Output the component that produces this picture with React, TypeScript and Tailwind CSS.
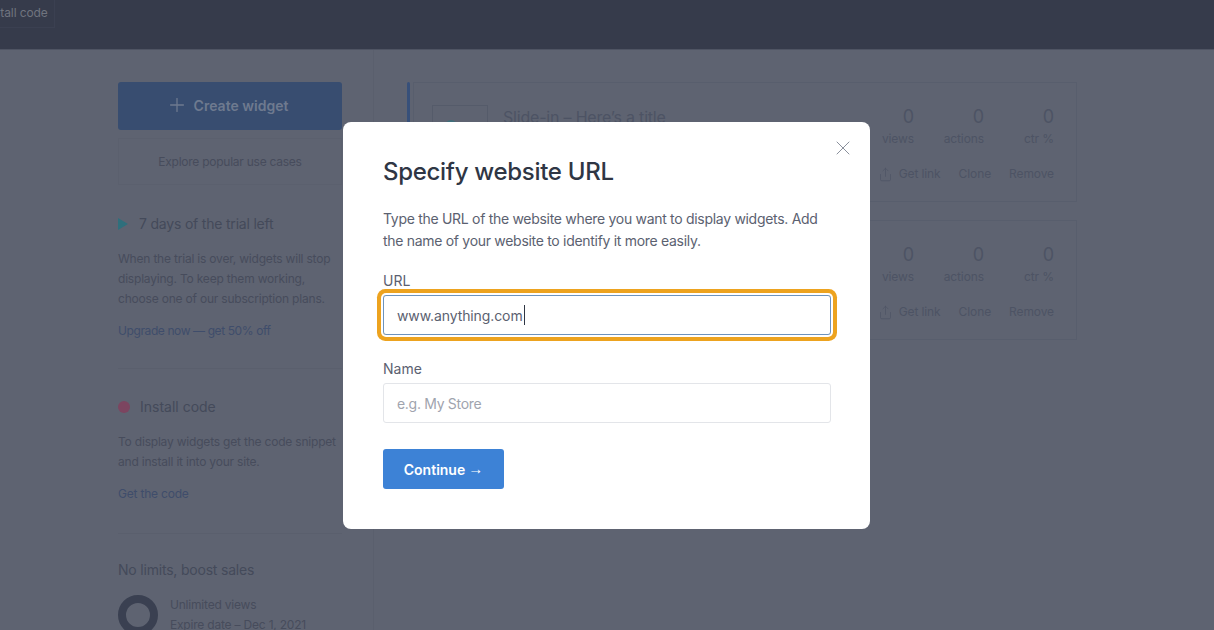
import { Plus, X, Share } from 'lucide-react';

const font = "font-['Inter','Noto_Sans',sans-serif]";

function StatColumn({ value, label }: { value: string; label: string }) {
  return (
    <div className="flex w-[70px] flex-col items-end">
      <span className="text-[18px] leading-[24px] text-[#4d5364]">{value}</span>
      <span className="mt-[1px] text-[12px] leading-[18px] tracking-[-0.1px] text-[#4d5364]">{label}</span>
    </div>
  );
}

function WidgetRow({ accent }: { accent?: boolean }) {
  return (
    <div className="relative h-[120px] w-[664px] border border-[#585e6d]">
      <div className="flex h-full">
        <div className="flex flex-1 pl-[18px] pt-[22px]">
          <div className="h-[44px] w-[56px] border border-[#555b6a]">
            <div className="ml-[12px] mt-[14px] h-[12px] w-[12px] rounded-full bg-[#3f6d7a]"></div>
          </div>
          <span className="ml-[15px] text-[16px] leading-[24px] tracking-[-0.2px] text-[#4d5364]">Slide-in – Here’s a title</span>
        </div>
        <div className="flex flex-col items-end pr-[22px] pt-[22px]">
          <div className="flex">
            <StatColumn value="0" label="views" />
            <StatColumn value="0" label="actions" />
            <StatColumn value="0" label="ctr %" />
          </div>
          <div className="mt-[17px] flex items-center text-[12px] leading-[18px] tracking-[-0.1px] text-[#4d5364]">
            <Share size={15} strokeWidth={1.1} className="mr-[6px]" />
            <span>Get link</span>
            <span className="ml-[18px]">Clone</span>
            <span className="ml-[18px]">Remove</span>
          </div>
        </div>
      </div>
      {accent && <div className="absolute -left-[7px] -top-px h-[120px] w-[3px] rounded-t-[2px] bg-[#37507a]"></div>}
    </div>
  );
}

export default function App() {
  return (
    <div className={`relative h-[630px] w-[1214px] overflow-hidden bg-[#5e6371] ${font}`}>
      <header className="relative h-[50px] border-b border-[#4f5463] bg-[#363b4b]">
        <div className="absolute -left-[17px] -top-[2px] flex h-[30px] w-[72px] items-center border border-[#3b4051] text-[12px] tracking-[-0.1px] text-[#70747f]">
          Install code
        </div>
      </header>

      <div className="flex h-[580px]">
        <aside className="h-full w-[374px] shrink-0 border-r border-[#5a5f6d] pl-[118px] pr-[30px] pt-[32px]">
          <div className="flex h-[48px] w-[224px] items-center justify-center rounded-[3px] bg-[#384d70] pb-[2px] pr-[6px] text-[14px] font-semibold text-[#6e7a8f]">
            <Plus size={22} strokeWidth={1.4} className="mr-[6px]" />
            Create widget
          </div>
          <div className="mt-[8px] flex h-[47px] w-[224px] items-center justify-center border border-[#5b606e] text-[12px] tracking-[-0.25px] text-[#474c5c]">
            Explore popular use cases
          </div>

          <div className="mt-[28px] flex items-center">
            <svg width="10" height="12" viewBox="0 0 10 12" className="mr-[11px] shrink-0"><path d="M0 0L10 6L0 12Z" fill="#2f6f7c" /></svg>
            <span className="text-[14px] leading-[22px] tracking-[-0.2px] text-[#444a5a]">7 days of the trial left</span>
          </div>
          <p className="mt-[14px] text-[12px] leading-[20px] tracking-[-0.2px] text-[#474c5c]">
            When the trial is over, widgets will stop<br />
            displaying. To keep them working,<br />
            choose one of our subscription plans.
          </p>
          <p className="mt-[12px] text-[12px] leading-[20px] tracking-[-0.4px] text-[#3f4d6b]">Upgrade now — get 50% off</p>

          <div className="mt-[27px] h-px w-[224px] bg-[#5a5f6d]"></div>

          <div className="mt-[27px] flex items-center">
            <span className="mr-[10px] h-[12px] w-[12px] shrink-0 rounded-full bg-[#7c4560]"></span>
            <span className="text-[14px] leading-[22px] text-[#444a5a]">Install code</span>
          </div>
          <p className="mt-[14px] whitespace-nowrap text-[12px] leading-[20px] tracking-[-0.2px] text-[#474c5c]">
            To display widgets get the code snippet<br />
            and install it into your site.
          </p>
          <p className="mt-[12px] text-[12px] leading-[20px] tracking-[-0.2px] text-[#3f4d6b]">Get the code</p>

          <div className="mt-[29px] h-px w-[224px] bg-[#5a5f6d]"></div>

          <p className="mt-[25px] text-[14px] leading-[22px] tracking-[-0.2px] text-[#444a5a]">No limits, boost sales</p>
          <div className="mt-[14px] flex">
            <div className="h-[40px] w-[40px] shrink-0 rounded-full border-[8px] border-[#3a4051]"></div>
            <div className="ml-[12px] text-[12px] leading-[20px] tracking-[-0.2px] text-[#474c5c]">
              <p>Unlimited views</p>
              <p>Expire date – Dec 1, 2021</p>
            </div>
          </div>
        </aside>

        <main className="flex-1 pl-[39px] pt-[32px]">
          <div className="flex flex-col gap-[18px]">
            <WidgetRow accent />
            <WidgetRow />
          </div>
        </main>
      </div>

      {/* modal sits over the dimmed dashboard */}
      <div className="absolute left-[343px] top-[122px] h-[407px] w-[527px] rounded-[8px] bg-white px-[40px] pt-[34px]">
        <X size={24} strokeWidth={1} className="absolute right-[15px] top-[14px] text-[#8a909c]" />
        <h2 className="text-[24px] font-medium leading-[32px] tracking-[-0.3px] text-[#2f3644]">Specify website URL</h2>
        <p className="mt-[20px] w-[447px] whitespace-nowrap text-[14px] leading-[22px] tracking-[-0.3px] text-[#5b6170]">
          Type the URL of the website where you want to display widgets. Add<br />
          the name of your website to identify it more easily.
        </p>
        <label className="mt-[18px] block text-[14px] leading-[22px] text-[#5b6170]">URL</label>
        <div className="mt-[3px] flex h-[40px] w-[448px] items-center rounded-[3px] border border-[#6d93bd] pl-[13px] text-[14px] tracking-[-0.1px] text-[#5b6170] shadow-[0_0_0_2px_#fff,0_0_0_6px_#eda31f]">
          www.anything.com<span className="ml-px h-[20px] w-px bg-[#2f3644]"></span>
        </div>
        <label className="mt-[23px] block text-[14px] leading-[22px] text-[#5b6170]">Name</label>
        <div className="mt-[3px] flex h-[40px] w-[448px] items-center rounded-[3px] border border-[#e3e5e9] pl-[13px] text-[14px] tracking-[-0.3px] text-[#9fa4ae]">
          e.g. My Store
        </div>
        <div className="mt-[26px] flex h-[40px] w-[121px] items-center justify-center rounded-[3px] bg-[#3d82d6] text-[14px] font-semibold text-white">
          Continue<span className="ml-[3px] font-['Liberation_Sans',sans-serif] text-[15px] font-normal">→</span>
        </div>
      </div>
    </div>
  );
}
